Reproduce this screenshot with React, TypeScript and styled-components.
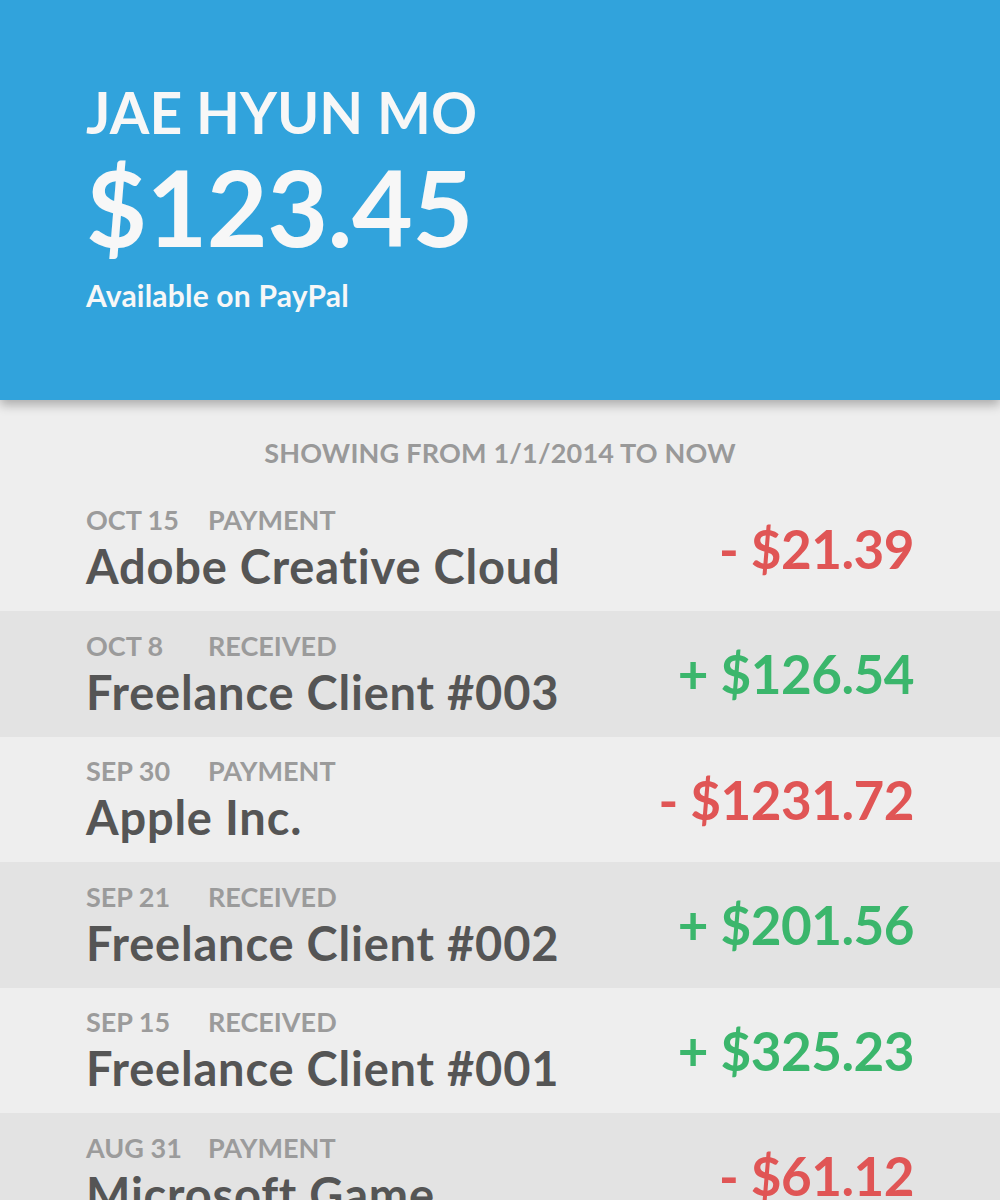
import React from 'react';
import styled, { createGlobalStyle } from 'styled-components';

const GlobalStyle = createGlobalStyle`
  html, body {
    margin: 0;
    padding: 0;
    background: #eeeeee;
    font-family: 'Lato', 'Liberation Sans', sans-serif;
    -webkit-font-smoothing: antialiased;
  }
`;

const Page = styled.div`
  width: 1000px;
  min-height: 1200px;
  background: #eeeeee;
  overflow: hidden;
`;

const Header = styled.header`
  position: relative;
  z-index: 1;
  height: 400px;
  box-sizing: border-box;
  padding: 82px 86px 0;
  background: #31a3dc;
  color: #f7f7f7;
  box-shadow: 0 5px 10px rgba(0, 0, 0, 0.28);
`;

const Name = styled.h1`
  margin: 0;
  font-size: 57px;
  line-height: 60px;
  font-weight: 700;
`;

const Balance = styled.div`
  margin-top: 12px;
  font-size: 105px;
  line-height: 105px;
  font-weight: 700;
  letter-spacing: -0.5px;
`;

const Caption = styled.div`
  margin-top: 20px;
  font-size: 30px;
  line-height: 32px;
  font-weight: 700;
  letter-spacing: 0.2px;
`;

const RangeLabel = styled.div`
  height: 85.5px;
  box-sizing: border-box;
  padding-top: 37px;
  text-align: center;
  font-size: 27px;
  line-height: 32px;
  font-weight: 700;
  letter-spacing: 0.2px;
  color: #999999;
`;

const Row = styled.div<{ $shade: boolean }>`
  height: 125.5px;
  box-sizing: border-box;
  padding: 0 86px;
  display: flex;
  align-items: center;
  justify-content: space-between;
  background: ${(p) => (p.$shade ? '#e3e3e3' : '#eeeeee')};
`;

const Info = styled.div`
  display: flex;
  flex-direction: column;
`;

const Meta = styled.div`
  display: flex;
  font-size: 27px;
  line-height: 32px;
  font-weight: 700;
  color: #9b9b9b;
`;

const MetaDate = styled.span`
  width: 122px;
`;

const Title = styled.div`
  margin-top: 4px;
  font-size: 47px;
  line-height: 52px;
  font-weight: 700;
  letter-spacing: 0.8px;
  color: #555555;
  white-space: nowrap;
`;

const Amount = styled.div<{ $income: boolean }>`
  font-size: 53px;
  font-weight: 700;
  letter-spacing: -0.5px;
  color: ${(p) => (p.$income ? '#3bb66c' : '#e05555')};
  white-space: nowrap;
`;

type Tx = { date: string; kind: string; title: string; amount: string; income: boolean };

const transactions: Tx[] = [
  { date: 'OCT 15', kind: 'PAYMENT', title: 'Adobe Creative Cloud', amount: '- $21.39', income: false },
  { date: 'OCT 8', kind: 'RECEIVED', title: 'Freelance Client #003', amount: '+ $126.54', income: true },
  { date: 'SEP 30', kind: 'PAYMENT', title: 'Apple Inc.', amount: '- $1231.72', income: false },
  { date: 'SEP 21', kind: 'RECEIVED', title: 'Freelance Client #002', amount: '+ $201.56', income: true },
  { date: 'SEP 15', kind: 'RECEIVED', title: 'Freelance Client #001', amount: '+ $325.23', income: true },
  { date: 'AUG 31', kind: 'PAYMENT', title: 'Microsoft Game', amount: '- $61.12', income: false },
];

const App: React.FC = () => (
  <Page>
    <GlobalStyle />
    <Header>
      <Name>JAE HYUN MO</Name>
      <Balance>$123.45</Balance>
      <Caption>Available on PayPal</Caption>
    </Header>
    <RangeLabel>SHOWING FROM 1/1/2014 TO NOW</RangeLabel>
    {transactions.map((tx, i) => (
      <Row key={tx.title + tx.date} $shade={i % 2 === 1}>
        <Info>
          <Meta>
            <MetaDate>{tx.date}</MetaDate>
            <span>{tx.kind}</span>
          </Meta>
          <Title>{tx.title}</Title>
        </Info>
        <Amount $income={tx.income}>{tx.amount}</Amount>
      </Row>
    ))}
  </Page>
);

export default App;
